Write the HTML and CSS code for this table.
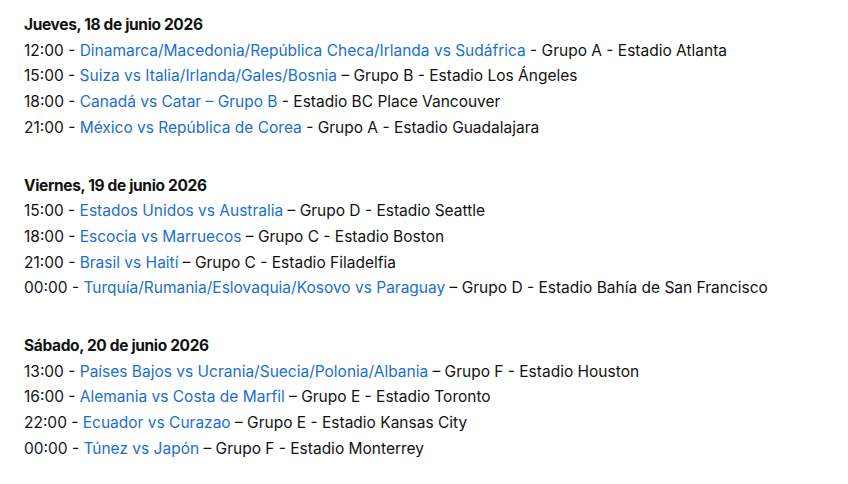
FILE: index.html
```html
<!DOCTYPE html>
<html lang="es">
<head>
<meta charset="utf-8">
<link rel="stylesheet" href="styles.css">
</head>
<body>
<div class="schedule">
  <div class="day">
    <div class="day-title">Jueves, 18 de junio 2026</div>
    <div class="row">12:00 - <a class="match">Dinamarca/Macedonia/República Checa/Irlanda vs Sudáfrica</a> - Grupo A - Estadio Atlanta</div>
    <div class="row">15:00 - <a class="match">Suiza vs Italia/Irlanda/Gales/Bosnia</a> – Grupo B - Estadio Los Ángeles</div>
    <div class="row">18:00 - <a class="match">Canadá vs Catar – Grupo B</a> - Estadio BC Place Vancouver</div>
    <div class="row">21:00 - <a class="match">México vs República de Corea</a> - Grupo A - Estadio Guadalajara</div>
  </div>
  <div class="day">
    <div class="day-title">Viernes, 19 de junio 2026</div>
    <div class="row">15:00 - <a class="match">Estados Unidos vs Australia</a> – Grupo D - Estadio Seattle</div>
    <div class="row">18:00 - <a class="match">Escocia vs Marruecos</a> – Grupo C - Estadio Boston</div>
    <div class="row">21:00 - <a class="match">Brasil vs Haití</a> – Grupo C - Estadio Filadelfia</div>
    <div class="row">00:00 - <a class="match">Turquía/Rumania/Eslovaquia/Kosovo vs Paraguay</a> – Grupo D - Estadio Bahía de San Francisco</div>
  </div>
  <div class="day">
    <div class="day-title">Sábado, 20 de junio 2026</div>
    <div class="row">13:00 - <a class="match">Países Bajos vs Ucrania/Suecia/Polonia/Albania</a> – Grupo F - Estadio Houston</div>
    <div class="row">16:00 - <a class="match">Alemania vs Costa de Marfil</a> – Grupo E - Estadio Toronto</div>
    <div class="row">22:00 - <a class="match">Ecuador vs Curazao</a> – Grupo E - Estadio Kansas City</div>
    <div class="row">00:00 - <a class="match">Túnez vs Japón</a> – Grupo F - Estadio Monterrey</div>
  </div>
</div>
</body>
</html>
```
FILE: styles.css
```css
html, body {
  margin: 0;
  padding: 0;
  background: #fff;
}
body {
  font-family: "Inter", "Noto Sans", sans-serif;
  font-size: 15.5px;
  color: #121212;
}
.schedule {
  padding: 12px 24px 0;
  display: flex;
  flex-direction: column;
  gap: 32px;
}
.day-title {
  font-weight: 700;
  font-size: 15.5px;
  line-height: 25.7px;
  letter-spacing: -0.35px;
}
.row {
  line-height: 25.7px;
  white-space: nowrap;
}
.match {
  color: #1a6fd0;
  text-decoration: none;
}
```
